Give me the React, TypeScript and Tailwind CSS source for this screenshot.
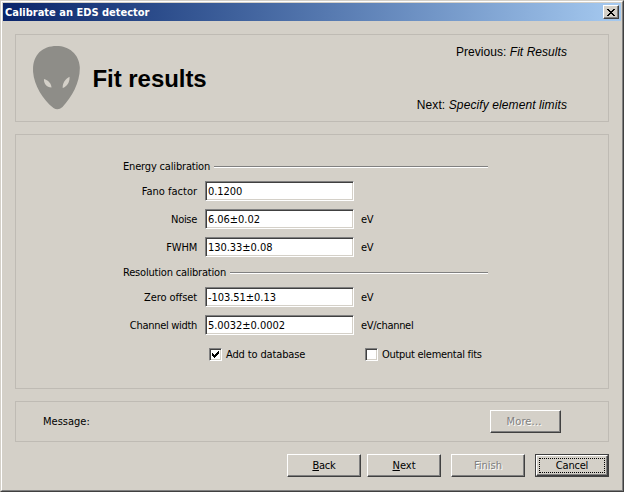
import type { ReactNode } from "react";

const raised =
  "border border-t-white border-l-white border-r-[#404040] border-b-[#404040] shadow-[inset_-1px_-1px_0_#808080]";
const sunken =
  "border border-t-[#808080] border-l-[#808080] border-r-white border-b-white shadow-[inset_1px_1px_0_#404040,inset_-1px_-1px_0_#d4d0c8] bg-white";

function Section({ title, tracking }: { title: string; tracking: string }) {
  return (
    <div className="flex h-[14px] w-[365px] items-center gap-[4px]">
      <span className={`pt-[2px] ${tracking}`}>{title}</span>
      <div className="mt-px h-[2px] flex-1 border-t border-b border-t-[#808080] border-b-white" />
    </div>
  );
}

function Field({ label, value, unit, tracking }: { label: string; value: string; unit?: string; tracking: string }) {
  return (
    <div className="flex h-[20px] items-center">
      <span className={`w-[74px] shrink-0 pt-[2px] text-right ${tracking}`}>{label}</span>
      <div className={`ml-[8px] flex h-[20px] w-[149px] shrink-0 items-center pl-[2px] ${sunken}`}>
        <span className="pt-[2px] tracking-[-0.05px]">{value}</span>
      </div>
      <span className="ml-[7px] pt-[2px] tracking-[-0.3px]">{unit}</span>
    </div>
  );
}

function Check({ label, checked, tracking }: { label: string; checked?: boolean; tracking: string }) {
  return (
    <div className="flex h-[14px] w-[156px] items-center gap-[4px]">
      <div className={`flex h-[13px] w-[13px] shrink-0 items-center justify-center ${sunken}`}>
        {checked && (
          <svg width="7" height="7" viewBox="0 0 7 7" shapeRendering="crispEdges">
            <path d="M0 2h1v1h1v1h1V3h1V2h1V1h1V0h1v3H6v1H5v1H4v1H3v1H2V6H1V5H0z" />
          </svg>
        )}
      </div>
      <span className={`pt-[2px] ${tracking}`}>{label}</span>
    </div>
  );
}

function Button({ children, className = "w-[74px]", disabled }: { children: ReactNode; className?: string; disabled?: boolean }) {
  return (
    <button
      className={`flex h-[23px] shrink-0 items-center justify-center ${raised} ${className} ${
        disabled ? "text-[#808080] [text-shadow:1px_1px_0_#fff]" : ""
      }`}
    >
      {children}
    </button>
  );
}

export default function App() {
  return (
    <div className="h-[492px] w-[624px] overflow-hidden border border-t-[#d4d0c8] border-l-[#d4d0c8] border-r-[#404040] border-b-[#404040] bg-[#d4d0c8] font-['DejaVu_Sans_Condensed','DejaVu_Sans',sans-serif] text-[11px] leading-[14px] whitespace-nowrap text-black [font-stretch:condensed]">
      <div className="flex h-full flex-col border border-t-white border-l-white border-r-[#808080] border-b-[#808080] p-px">
        <header className="flex h-[18px] shrink-0 items-center justify-between bg-linear-to-r from-[#0a246a] to-[#a6caf0] pr-[2px] pl-[2px] font-bold text-white">
          <span className="pt-[2px]">Calibrate an EDS detector</span>
          <button className={`flex h-[14px] w-[16px] items-center justify-center bg-[#d4d0c8] ${raised}`}>
            <svg width="8" height="7" viewBox="0 0 8 7" shapeRendering="crispEdges">
              <path d="M0 0h2v1h1v1h2V1h1V0h2v1H7v1H6v1H5v1h1v1h1v1h1v1H6V6H5V5H3v1H2v1H0V6h1V5h1V4h1V3H2V2H1V1H0z" />
            </svg>
          </button>
        </header>
        <main className="flex flex-col px-[12px] pt-[13px]">
          <section className="flex h-[88px] justify-between border border-[#bfbbb4] pl-[17px] pr-[41px] font-['Liberation_Sans',Arial,sans-serif]">
            <div className="flex">
              <svg className="mt-[11px]" width="47" height="64" viewBox="0 0 47 64">
                <path
                  fill="#8e8d88"
                  fillRule="evenodd"
                  d="M23.5 0C36 0 46 8 46.800 21C47.300 36 39 51 29.500 61Q25 65 20.500 62C10 54 1 39 .1 26C-.8 9 9 0 23.500 0ZM11 33C10.600 37 13 41.500 18.500 41.600C18.500 37.500 15 34 11 33ZM36.500 30.800C32 33 29.500 37.500 29.700 42C34 40.500 37 36 36.500 30.800Z"
                />
              </svg>
              <h1 className="mt-[30px] ml-[12.5px] text-[24px] leading-[28px] font-bold tracking-[-0.05px]">Fit results</h1>
            </div>
            <div className="flex flex-col items-end justify-between pt-[10px] pb-[9px] text-[12px]">
              <div className="tracking-[0.05px]">Previous: <i>Fit Results</i></div>
              <div className="tracking-[0.1px]">Next: <i>Specify element limits</i></div>
            </div>
          </section>

          <section className="mt-[12px] flex h-[255px] flex-col border border-[#bfbbb4] pt-[24px] pl-[107px]">
            <Section title="Energy calibration" tracking="tracking-[-0.17px]" />
            <div className="mt-[8px] flex flex-col gap-[8px]">
              <Field label="Fano factor" value="0.1200" tracking="tracking-[0px]" />
              <Field label="Noise" value="6.06±0.02" unit="eV" tracking="tracking-[-0.3px]" />
              <Field label="FWHM" value="130.33±0.08" unit="eV" tracking="tracking-[-0.2px]" />
            </div>
            <div className="mt-[8px]">
              <Section title="Resolution calibration" tracking="tracking-[-0.19px]" />
            </div>
            <div className="mt-[8px] flex flex-col gap-[8px]">
              <Field label="Zero offset" value="-103.51±0.13" unit="eV" tracking="tracking-[-0.1px]" />
              <Field label="Channel width" value="5.0032±0.0002" unit="eV/channel" tracking="tracking-[-0.3px]" />
            </div>
            <div className="mt-[12px] ml-[86px] flex">
              <Check label="Add to database" tracking="tracking-[-0.13px]" checked />
              <Check label="Output elemental fits" tracking="tracking-[-0.28px]" />
            </div>
          </section>

          <section className="mt-[12px] flex h-[41px] items-center justify-between border border-[#bfbbb4] pr-[47px] pl-[27px]">
            <span>Message:</span>
            <Button className="w-[71px] pr-[3px] tracking-[0.15px]" disabled>More...</Button>
          </section>

          <footer className="mt-[12px] flex justify-end">
            <Button className="w-[74px] tracking-[-0.2px]"><span><u>B</u>ack</span></Button>
            <Button className="ml-[6px] w-[74px]"><span><u>N</u>ext</span></Button>
            <Button className="ml-[10px] w-[74px]" disabled>Finish</Button>
            <div className="ml-[10px] h-[23px] w-[74px] border border-[#404040]">
              <div className={`h-full w-full p-[2px] ${raised}`}>
                <div className="flex h-full w-full items-center justify-center border border-dotted border-black tracking-[-0.2px]">Cancel</div>
              </div>
            </div>
          </footer>
        </main>
      </div>
    </div>
  );
}
